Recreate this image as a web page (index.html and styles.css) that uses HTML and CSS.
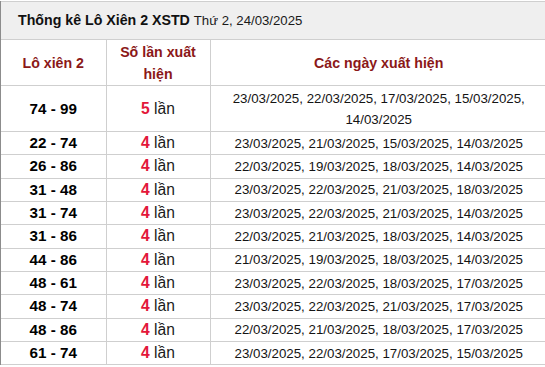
FILE: index.html
```html
<!DOCTYPE html>
<html lang="vi">
<head>
<meta charset="utf-8">
<title>Thống kê Lô Xiên 2 XSTD</title>
<link rel="stylesheet" href="styles.css">
</head>
<body>
<div class="wrap">
  <div class="title"><b>Thống kê Lô Xiên 2 XSTD</b> <span class="date">Thứ 2, 24/03/2025</span></div>
  <table class="stats">
    <colgroup><col class="c1"><col class="c2"><col class="c3"></colgroup>
    <thead>
      <tr class="head">
        <th>Lô xiên 2</th>
        <th>Số lần xuất<br>hiện</th>
        <th>Các ngày xuất hiện</th>
      </tr>
    </thead>
    <tbody>
      <tr class="tall"><td class="pair">74 - 99</td><td class="cnt"><b>5</b> lần</td><td class="dates">23/03/2025, 22/03/2025, 17/03/2025, 15/03/2025,<br>14/03/2025</td></tr>
      <tr><td class="pair">22 - 74</td><td class="cnt"><b>4</b> lần</td><td class="dates">23/03/2025, 21/03/2025, 15/03/2025, 14/03/2025</td></tr>
      <tr><td class="pair">26 - 86</td><td class="cnt"><b>4</b> lần</td><td class="dates">22/03/2025, 19/03/2025, 18/03/2025, 14/03/2025</td></tr>
      <tr><td class="pair">31 - 48</td><td class="cnt"><b>4</b> lần</td><td class="dates">23/03/2025, 22/03/2025, 21/03/2025, 18/03/2025</td></tr>
      <tr><td class="pair">31 - 74</td><td class="cnt"><b>4</b> lần</td><td class="dates">23/03/2025, 22/03/2025, 21/03/2025, 14/03/2025</td></tr>
      <tr><td class="pair">31 - 86</td><td class="cnt"><b>4</b> lần</td><td class="dates">22/03/2025, 21/03/2025, 18/03/2025, 14/03/2025</td></tr>
      <tr><td class="pair">44 - 86</td><td class="cnt"><b>4</b> lần</td><td class="dates">21/03/2025, 19/03/2025, 18/03/2025, 14/03/2025</td></tr>
      <tr><td class="pair">48 - 61</td><td class="cnt"><b>4</b> lần</td><td class="dates">23/03/2025, 22/03/2025, 18/03/2025, 17/03/2025</td></tr>
      <tr><td class="pair">48 - 74</td><td class="cnt"><b>4</b> lần</td><td class="dates">23/03/2025, 22/03/2025, 21/03/2025, 17/03/2025</td></tr>
      <tr><td class="pair">48 - 86</td><td class="cnt"><b>4</b> lần</td><td class="dates">22/03/2025, 21/03/2025, 18/03/2025, 17/03/2025</td></tr>
      <tr><td class="pair">61 - 74</td><td class="cnt"><b>4</b> lần</td><td class="dates">23/03/2025, 22/03/2025, 17/03/2025, 15/03/2025</td></tr>
    </tbody>
  </table>
</div>
</body>
</html>
```

FILE: styles.css
```css
html, body {
  margin: 0;
  padding: 0;
  background: #fff;
  overflow: hidden;
}
body {
  font-family: "Liberation Sans", Arial, sans-serif;
  color: #111;
}
.wrap {
  width: 547px;
  margin-top: 1px;
  border-left: 1px solid #8c8c8c;
}
.title {
  box-sizing: border-box;
  height: 39px;
  padding-left: 17px;
  border-top: 1px solid #cfcfcf;
  border-bottom: 1px solid #cfcfcf;
  background: #efefef;
  font-size: 14.2px;
  line-height: 37px;
  color: #111;
}
.title .date {
  font-size: 13.2px;
  color: #1a1a1a;
}
.stats {
  width: 547px;
  table-layout: fixed;
  border-collapse: collapse;
}
.c1 { width: 105px; }
.c2 { width: 104px; }
.stats th,
.stats td {
  border: 1px solid #cfcfcf;
  border-top: 0;
  padding: 0 2px;
  text-align: center;
  vertical-align: middle;
}
.stats th:first-child,
.stats td:first-child {
  border-left: 0;
}
.head th {
  height: 45px;
  font-size: 14.2px;
  line-height: 22px;
  font-weight: bold;
  color: #8b1818;
}
.stats tbody tr { height: 23.33px; }
.stats tbody tr.tall { height: 46px; }
.pair {
  font-size: 15.2px;
  font-weight: bold;
  color: #000;
  line-height: 20px;
}
.cnt {
  font-size: 15.6px;
  color: #1a1a1a;
  line-height: 20px;
}
.cnt b { color: #e3173a; }
.dates {
  font-size: 13.3px;
  line-height: 21px;
  color: #141414;
}
```
